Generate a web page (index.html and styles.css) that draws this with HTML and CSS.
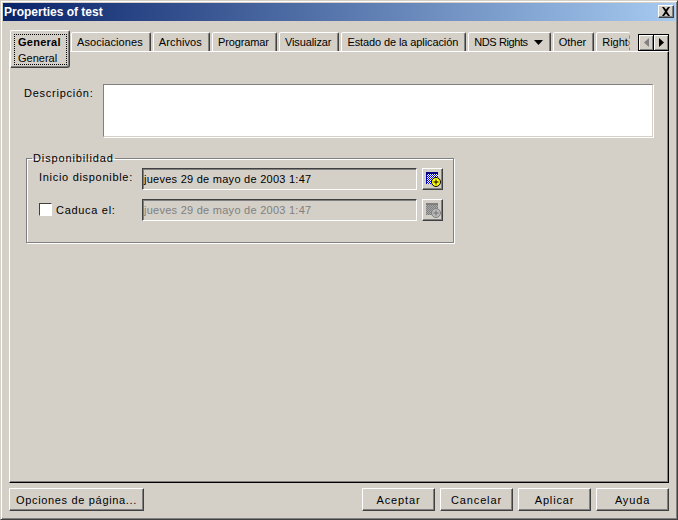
FILE: index.html
```html
<!DOCTYPE html>
<html lang="es">
<head>
<meta charset="utf-8">
<title>Properties of test</title>
<link rel="stylesheet" href="styles.css">
</head>
<body>
<div class="window">
  <header class="titlebar">
    <span class="title">Properties of test</span>
    <button class="close" aria-label="Cerrar">
      <svg width="10" height="9" viewBox="0 0 10 9"><path d="M1 0h2l2 2.500 2-2.500h2L6 4.500 9 9H7L5 6.500 3 9H1l3-4.500z" fill="#000"/></svg>
    </button>
  </header>
  <div class="content">
    <nav class="tabs">
      <div class="tab active"><div class="focus"><b>General</b><span>General</span></div></div>
      <div class="tab tab-assoc">Asociaciones</div>
      <div class="tab tab-files">Archivos</div>
      <div class="tab tab-prog">Programar</div>
      <div class="tab tab-view">Visualizar</div>
      <div class="tab tab-long">Estado de la aplicación</div>
      <div class="tab tab-menu"><span class="menu-label">NDS Rights</span><svg width="9" height="5" viewBox="0 0 9 5"><path d="M0 0h9L4.500 5z" fill="#000"/></svg></div>
      <div class="tab">Other</div>
      <div class="tab tab-cut"><span>Rights</span><svg width="3" height="17" viewBox="0 0 3 17"><path d="M2 0L0 3l2 3-2 3 2 3-2 3 2 2" fill="none" stroke="#808080"/></svg></div>
      <div class="scroller">
        <button class="scroll scroll-prev" aria-label="Anterior"><svg width="5" height="9" viewBox="0 0 5 9"><path d="M5 0v9L0 4.500z" fill="#808080"/></svg></button>
        <button class="scroll" aria-label="Siguiente"><svg width="5" height="9" viewBox="0 0 5 9"><path d="M0 0v9l5-4.500z" fill="#000"/></svg></button>
      </div>
    </nav>
    <main class="panel">
      <div class="desc-row">
        <label class="desc-label">Descripción:</label>
        <div class="textarea"></div>
      </div>
      <fieldset class="group">
        <legend>Disponibilidad</legend>
        <div class="row">
          <label class="row-label">Inicio disponible:</label>
          <div class="field">jueves 29 de mayo de 2003 1:47</div>
          <button class="cal" aria-label="Calendario">
            <svg width="18" height="17" viewBox="0 0 18 17" shape-rendering="crispEdges">
              <defs><pattern id="d1" width="2" height="2" patternUnits="userSpaceOnUse"><rect width="2" height="2" fill="#ffffff"/><rect width="1" height="1" fill="#0000ff"/><rect x="1" y="1" width="1" height="1" fill="#0000ff"/></pattern></defs>
              <rect x="2" y="1" width="12" height="12" fill="url(#d1)"/>
              <rect x="2" y="1" width="12" height="2" fill="#000080"/>
              <rect x="2" y="3" width="1" height="10" fill="#0000c0"/>
              <g shape-rendering="auto">
                <circle cx="12" cy="11" r="4.500" fill="#ffff00" stroke="#000"/>
                <path d="M9.500 11h5M12 8.500v5" stroke="#000"/>
              </g>
            </svg>
          </button>
        </div>
        <div class="row row-two">
          <label class="row-label check-label"><span class="check"></span>Caduca el:</label>
          <div class="field disabled">jueves 29 de mayo de 2003 1:47</div>
          <button class="cal" aria-label="Calendario" disabled>
            <svg width="18" height="17" viewBox="0 0 18 17" shape-rendering="crispEdges">
              <defs><pattern id="d2" width="2" height="2" patternUnits="userSpaceOnUse"><rect width="2" height="2" fill="#a8a8a8"/><rect width="1" height="1" fill="#808080"/><rect x="1" y="1" width="1" height="1" fill="#808080"/></pattern></defs>
              <rect x="2" y="1" width="12" height="12" fill="url(#d2)"/>
              <rect x="2" y="1" width="12" height="2" fill="#808080"/>
              <g shape-rendering="auto">
                <circle cx="12" cy="11" r="4.500" fill="#b8b8b8" stroke="#808080"/>
                <path d="M9.500 11h5M12 8.500v5" stroke="#707070"/>
              </g>
            </svg>
          </button>
        </div>
      </fieldset>
    </main>
    <footer class="footer">
      <button class="btn btn-wide">Opciones de página...</button>
      <div class="actions">
        <button class="btn">Aceptar</button>
        <button class="btn">Cancelar</button>
        <button class="btn">Aplicar</button>
        <button class="btn">Ayuda</button>
      </div>
    </footer>
  </div>
</div>
</body>
</html>
```

FILE: styles.css
```css
* { box-sizing: border-box; }
html, body { margin: 0; padding: 0; }
body {
  width: 678px;
  height: 520px;
  overflow: hidden;
  font: 11px "Liberation Sans", Arial, sans-serif;
  color: #000;
  background: #d4d0c8;
}
button { font: inherit; color: inherit; margin: 0; padding: 0; }

.window {
  width: 678px;
  height: 520px;
  display: flex;
  flex-direction: column;
  padding: 3px;
  background: #d4d0c8;
  border: 1px solid;
  border-color: #d4d0c8 #404040 #404040 #d4d0c8;
  box-shadow: inset 1px 1px 0 #fff, inset -1px -1px 0 #808080;
}

.titlebar {
  height: 18px;
  flex: none;
  display: flex;
  align-items: center;
  justify-content: space-between;
  padding: 0 1px 2px 1px;
  margin: -1px -1px 0 -1px;
  background: linear-gradient(to right, #0a246a, #a6caf0);
}
.title { color: #fff; font-weight: bold; font-size: 12px; padding-top: 2px; }
.close {
  width: 16px;
  height: 13px;
  display: flex;
  align-items: center;
  justify-content: center;
  background: #d4d0c8;
  border: 1px solid;
  border-color: #fff #404040 #404040 #fff;
  box-shadow: inset -1px -1px 0 #808080;
}

.content {
  flex: 1;
  display: flex;
  flex-direction: column;
  padding: 10px 5px 4px 5px;
}

.tabs {
  height: 20px;
  flex: none;
  display: flex;
  align-items: flex-end;
  gap: 2px;
  padding-left: 1px;
  position: relative;
  z-index: 1;
}
.tab {
  height: 19px;
  flex: none;
  padding: 0 7px 0 5px;
  display: flex;
  align-items: center;
  white-space: nowrap;
  background: #d4d0c8;
  border: 1px solid;
  border-bottom: 0;
  border-color: #fff #404040 transparent #fff;
  border-top-left-radius: 2px;
  border-top-right-radius: 2px;
  box-shadow: inset -1px 0 0 #808080;
}
.tab.active {
  height: 38px;
  width: 60px;
  margin: -1px -1px 0 0;
  padding: 3px 2px 2px 3px;
  align-self: flex-start;
  border-bottom: 1px solid #404040;
  border-radius: 2px 2px 3px 0;
  box-shadow: inset -1px -1px 0 #808080;
}
.focus {
  flex: 1;
  height: 100%;
  display: flex;
  flex-direction: column;
  justify-content: center;
  gap: 3px;
  padding: 1px 0 0 3px;
  border: 1px dotted #000;
}
.focus b { line-height: 13px; letter-spacing: .25px; }
.focus span { line-height: 13px; }
.tab-assoc { letter-spacing: .08px; }
.tab-files { letter-spacing: .12px; }
.tab-prog { letter-spacing: -.11px; }
.tab-view { letter-spacing: -.1px; }
.tab-long { letter-spacing: -.1px; }
.menu-label { letter-spacing: -.4px; }
.tab-menu svg { margin-left: 6px; }
.tab-cut {
  width: 34px;
  padding: 0 0 0 5px;
  border-right: 0;
  box-shadow: none;
  overflow: hidden;
}
.tab-cut span { flex: none; width: 27px; overflow: hidden; }
.tab-cut svg { flex: none; }
.scroller {
  margin-left: auto;
  display: flex;
  height: 17px;
}
.scroll {
  width: 15px;
  height: 17px;
  display: flex;
  align-items: center;
  justify-content: center;
  background: #d4d0c8;
  border: 1px solid #000;
  box-shadow: inset 1px 1px 0 #fff, inset -1px -1px 0 #808080;
}
.scroll-prev { width: 16px; }
.scroll + .scroll { border-left: 0; }

.panel {
  flex: 1;
  min-height: 0;
  padding: 32px 14px 0 14px;
  background: #d4d0c8;
  border: 1px solid;
  border-color: #fff #000 #000 #fff;
  box-shadow: inset -1px -1px 0 #808080;
}
.desc-row { display: flex; height: 53px; }
.desc-label { width: 79px; padding-top: 3px; letter-spacing: .75px; }
.textarea {
  width: 550px;
  background: #fff;
  border: 1px solid;
  border-color: #808080 #d4d0c8 #d4d0c8 #808080;
  box-shadow: 1px 1px 0 #fff;
}

.group {
  width: 428px;
  height: 91px;
  margin: 15px 0 0 2px;
  padding: 0 8px 0 12px;
  border: 1px solid #808080;
  box-shadow: 1px 1px 0 #fff, inset 1px 1px 0 #fff;
  min-width: 0;
}
.group legend { padding: 0 1px; margin-left: -7px; letter-spacing: .87px; }
.row { display: flex; align-items: flex-start; height: 21px; margin-top: 4px; }
.row-two { margin-top: 10px; }
.row-label {
  width: 103px;
  flex: none;
  padding-top: 3px;
  letter-spacing: .7px;
}
.field {
  width: 275px;
  flex: none;
  height: 22px;
  padding: 3px 0 0 1px;
  line-height: 15px;
  letter-spacing: .26px;
  background: #d4d0c8;
  border: 1px solid;
  border-color: #404040 #fff #fff #404040;
  box-shadow: inset 1px 1px 0 #808080;
}
.field.disabled { color: #808080; }
.check-label { display: flex; align-items: center; gap: 4px; padding-top: 4px; }
.check {
  width: 13px;
  height: 13px;
  flex: none;
  background: #fff;
  border: 1px solid;
  border-color: #404040 #fff #fff #404040;
}
.cal {
  width: 21px;
  height: 22px;
  flex: none;
  margin-left: 5px;
  display: flex;
  align-items: center;
  justify-content: center;
  background: #d4d0c8;
  border: 1px solid;
  border-color: #fff #404040 #404040 #fff;
  box-shadow: inset -1px -1px 0 #808080;
}

.footer {
  flex: none;
  height: 29px;
  padding-top: 5px;
  display: flex;
  justify-content: space-between;
}
.actions { display: flex; gap: 5px; }
.btn {
  width: 73px;
  height: 23px;
  background: #d4d0c8;
  letter-spacing: .85px;
  border: 1px solid;
  border-color: #fff #404040 #404040 #fff;
  box-shadow: inset -1px -1px 0 #808080;
}
.btn-wide { width: 135px; letter-spacing: .67px; }
```
